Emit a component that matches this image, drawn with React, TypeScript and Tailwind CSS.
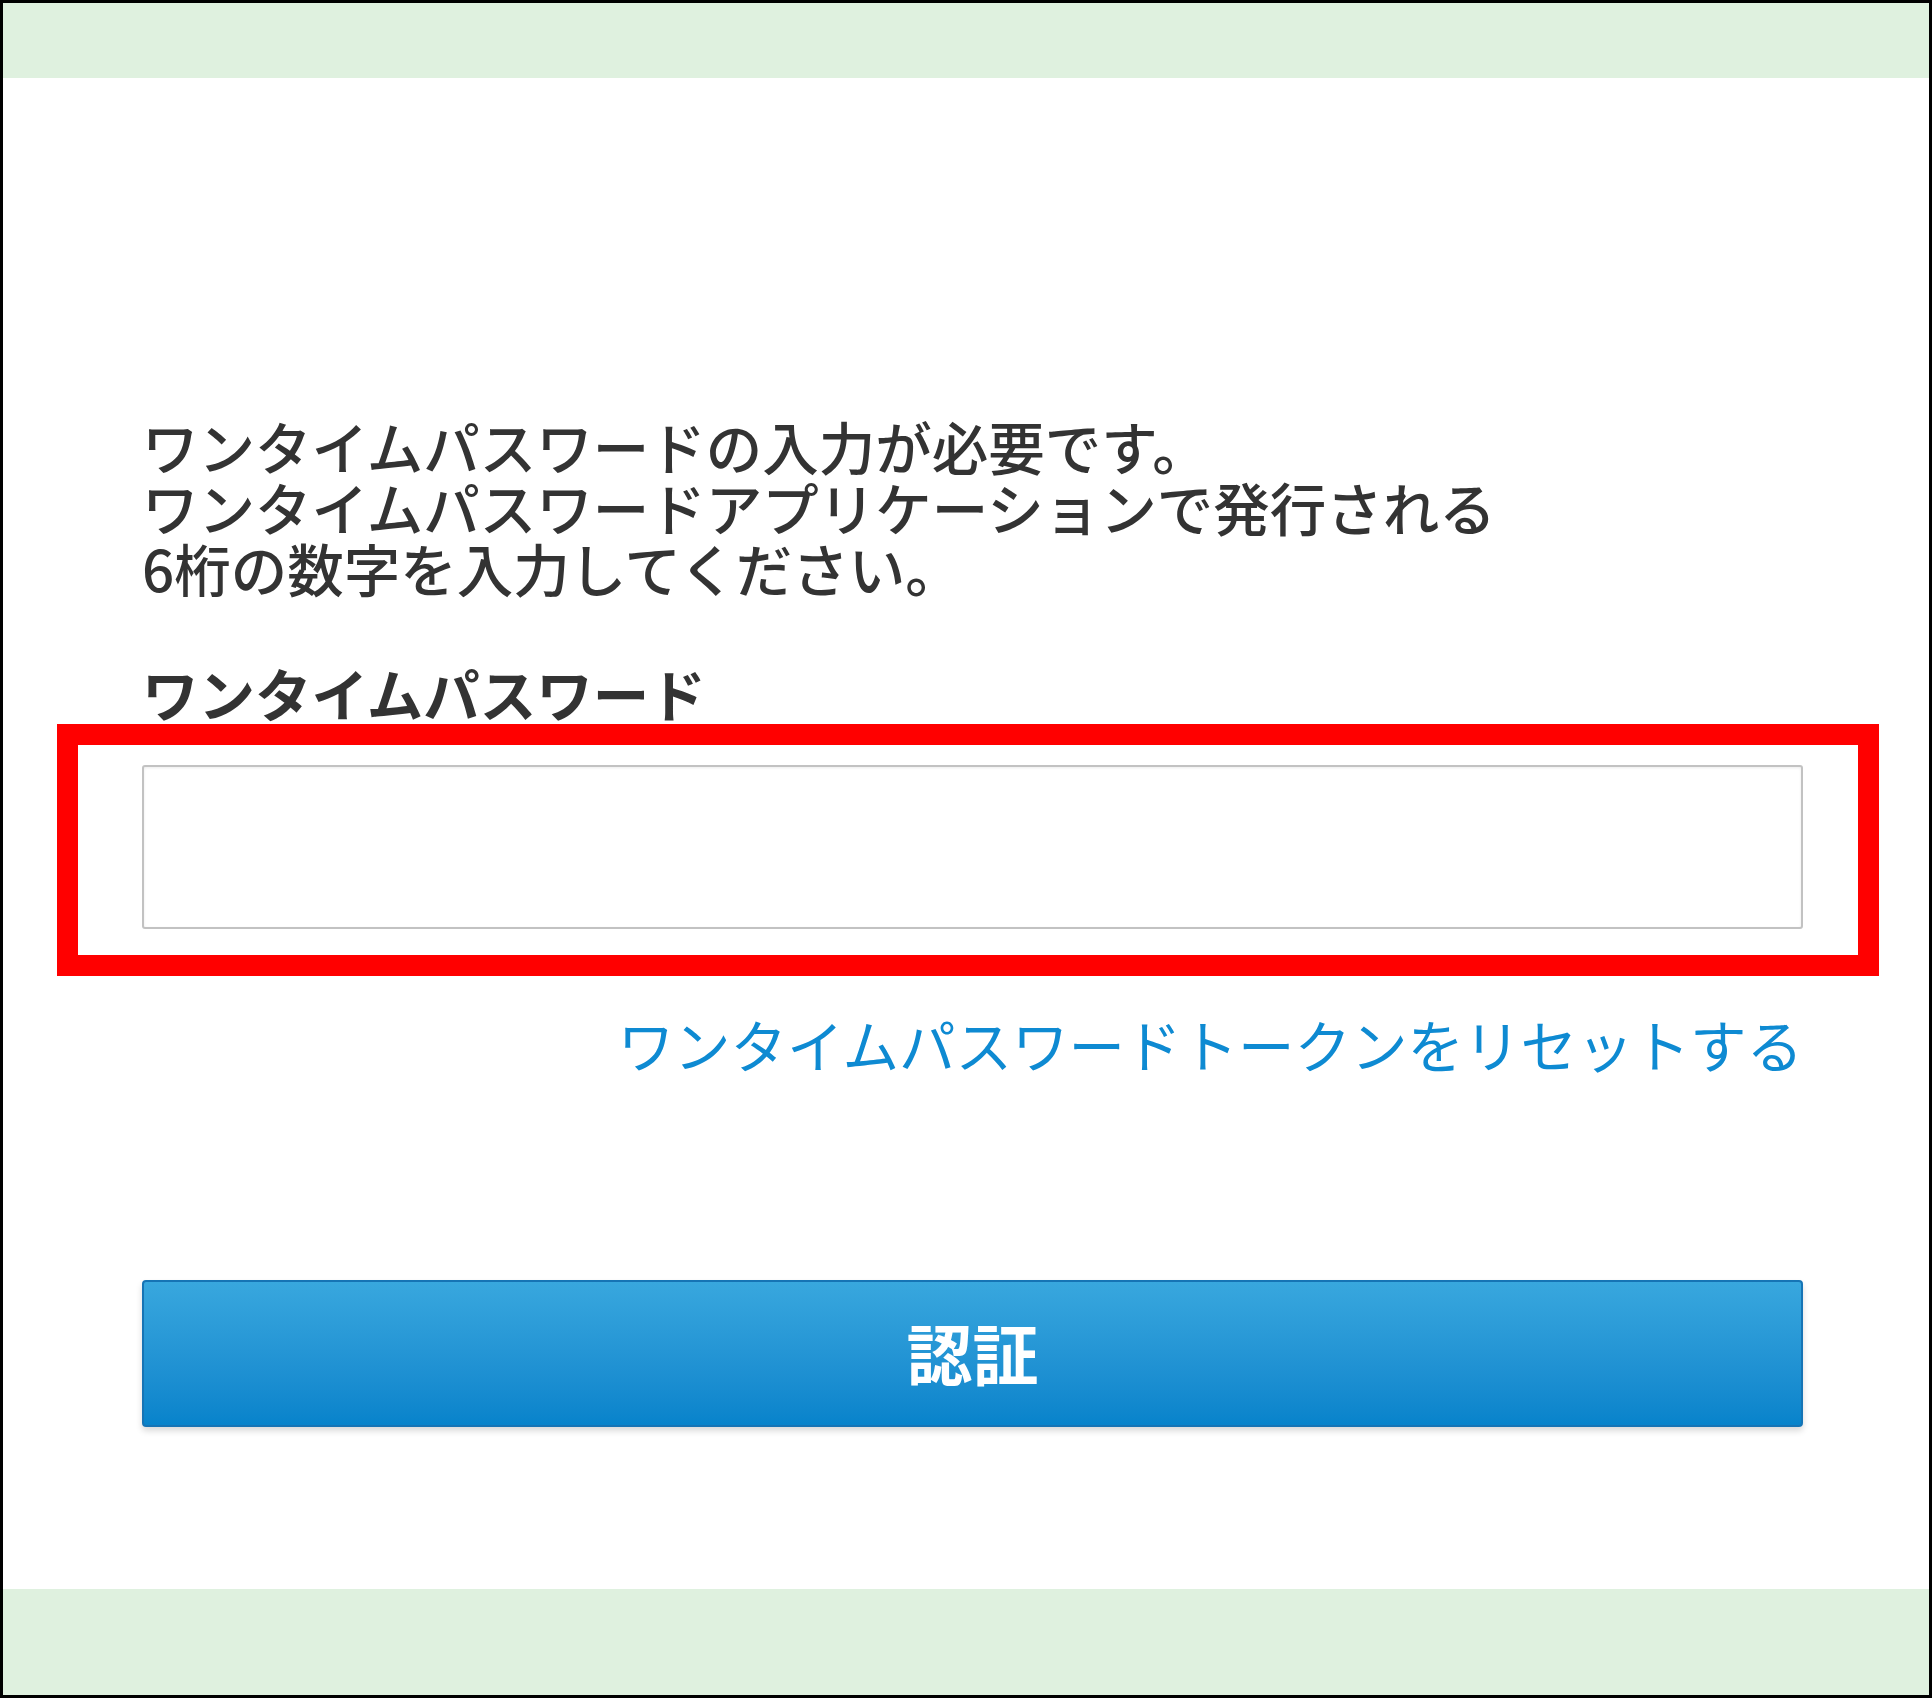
export default function App() {
  return (
    <div className="flex h-[1698px] w-[1932px] flex-col border-[3px] border-black bg-white font-['Noto_Sans_CJK_JP','Noto_Sans',sans-serif] text-[#333333]">
      <div className="h-[75px] bg-[#dff1df]" />

      <main className="flex flex-1 flex-col pl-[139px] pr-[126px] pt-[337px]">
        <p className="text-[56.5px] font-medium leading-[61px]">
          ワンタイムパスワードの入力が必要です。
          <br />
          ワンタイムパスワードアプリケーションで発行される
          <br />
          6桁の数字を入力してください。
        </p>

        <label htmlFor="otp" className="mt-[66px] text-[56.5px] font-bold leading-[56px]">
          ワンタイムパスワード
        </label>

        {/* red highlight around the field */}
        <div className="mt-[4px] -ml-[85px] -mr-[76px] border-[21px] border-[#ff0000] pb-[26px] pl-[64px] pr-[55px] pt-[20px]">
          <input
            id="otp"
            type="text"
            className="block h-[164px] w-full rounded-[3px] border-2 border-[#c2c2c2] bg-white shadow-[inset_0_1px_3px_rgba(0,0,0,0.08)] outline-none"
          />
        </div>

        <div className="mt-[37px] flex justify-end">
          <a href="#" className="text-[56.5px] leading-[61px] text-[#0e8ad2]">
            ワンタイムパスワードトークンをリセットする
          </a>
        </div>

        <button
          type="button"
          className="mt-[206px] flex h-[147px] w-full items-center justify-center rounded-[4px] border-2 border-[#1674b5] bg-linear-to-b from-[#38a7de] to-[#0783cb] pb-[4px] text-[66px] font-bold text-white shadow-[0_4px_6px_rgba(0,0,0,0.15)]"
        >
          認証
        </button>
      </main>

      <div className="h-[106px] bg-[#dff1df]" />
    </div>
  );
}
